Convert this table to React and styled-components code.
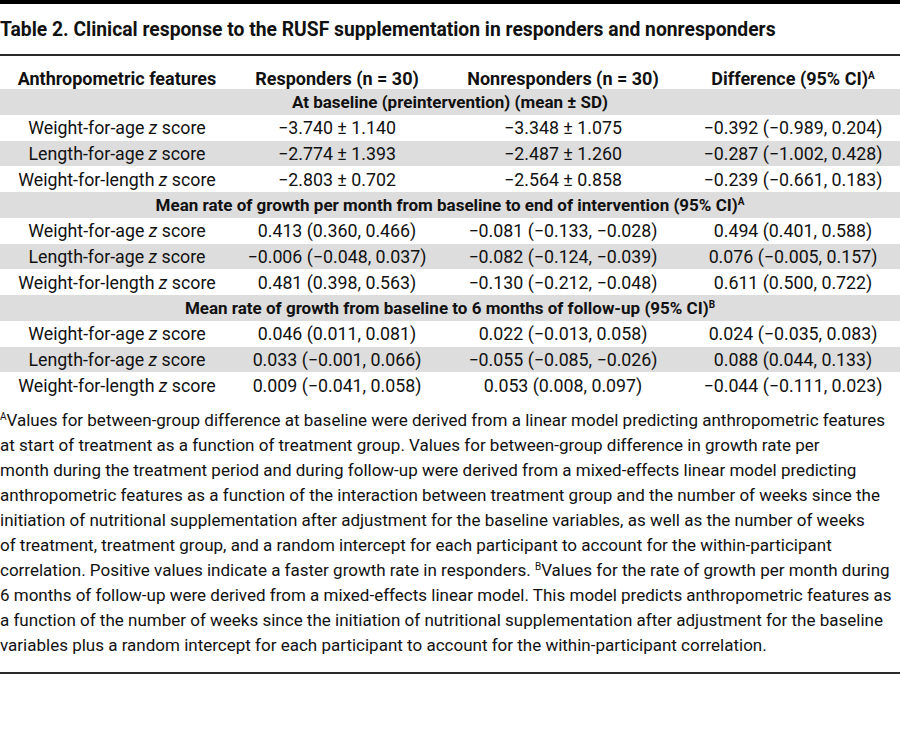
import React from "react";
import styled, { createGlobalStyle } from "styled-components";

const GlobalStyle = createGlobalStyle`
  body {
    margin: 0;
    background: #fff;
    color: #111;
    font-family: Roboto, "Liberation Sans", sans-serif;
  }
`;

const sections = [
  {
    title: <>At baseline (preintervention) (mean ± SD)</>,
    rows: [
      ["Weight-for-age", "−3.740 ± 1.140", "−3.348 ± 1.075", "−0.392 (−0.989, 0.204)"],
      ["Length-for-age", "−2.774 ± 1.393", "−2.487 ± 1.260", "−0.287 (−1.002, 0.428)"],
      ["Weight-for-length", "−2.803 ± 0.702", "−2.564 ± 0.858", "−0.239 (−0.661, 0.183)"],
    ],
  },
  {
    title: (
      <>
        Mean rate of growth per month from baseline to end of intervention (95% CI)<sup>A</sup>
      </>
    ),
    rows: [
      ["Weight-for-age", "0.413 (0.360, 0.466)", "−0.081 (−0.133, −0.028)", "0.494 (0.401, 0.588)"],
      ["Length-for-age", "−0.006 (−0.048, 0.037)", "−0.082 (−0.124, −0.039)", "0.076 (−0.005, 0.157)"],
      ["Weight-for-length", "0.481 (0.398, 0.563)", "−0.130 (−0.212, −0.048)", "0.611 (0.500, 0.722)"],
    ],
  },
  {
    title: (
      <>
        Mean rate of growth from baseline to 6 months of follow-up (95% CI)<sup>B</sup>
      </>
    ),
    rows: [
      ["Weight-for-age", "0.046 (0.011, 0.081)", "0.022 (−0.013, 0.058)", "0.024 (−0.035, 0.083)"],
      ["Length-for-age", "0.033 (−0.001, 0.066)", "−0.055 (−0.085, −0.026)", "0.088 (0.044, 0.133)"],
      ["Weight-for-length", "0.009 (−0.041, 0.058)", "0.053 (0.008, 0.097)", "−0.044 (−0.111, 0.023)"],
    ],
  },
];

const footnoteLines = [
  <>
    <sup>A</sup>Values for between-group difference at baseline were derived from a linear model predicting anthropometric features
  </>,
  "at start of treatment as a function of treatment group. Values for between-group difference in growth rate per",
  "month during the treatment period and during follow-up were derived from a mixed-effects linear model predicting",
  "anthropometric features as a function of the interaction between treatment group and the number of weeks since the",
  "initiation of nutritional supplementation after adjustment for the baseline variables, as well as the number of weeks",
  "of treatment, treatment group, and a random intercept for each participant to account for the within-participant",
  <>
    correlation. Positive values indicate a faster growth rate in responders. <sup>B</sup>Values for the rate of growth per month during
  </>,
  "6 months of follow-up were derived from a mixed-effects linear model. This model predicts anthropometric features as",
  "a function of the number of weeks since the initiation of nutritional supplementation after adjustment for the baseline",
  "variables plus a random intercept for each participant to account for the within-participant correlation.",
];

const App = () => {
  return (
    <Page>
      <GlobalStyle />
      <TopBar />
      <Title>Table 2. Clinical response to the RUSF supplementation in responders and nonresponders</Title>
      <Rule />
      <Table>
        <colgroup>
          <col width="234" />
          <col width="206" />
          <col width="246" />
          <col width="214" />
        </colgroup>
        <thead>
          <tr>
            <HeadCell>Anthropometric features</HeadCell>
            <HeadCell>Responders (n = 30)</HeadCell>
            <HeadCell>Nonresponders (n = 30)</HeadCell>
            <HeadCell>
              Difference (95% CI)<sup>A</sup>
            </HeadCell>
          </tr>
        </thead>
        <tbody>
          {sections.map((section, si) => (
            <React.Fragment key={si}>
              <Row $shaded>
                <SectionCell colSpan={4}>{section.title}</SectionCell>
              </Row>
              {section.rows.map((row, ri) => (
                <Row key={ri} $shaded={ri === 1}>
                  <Cell>
                    {row[0]} <i>z</i> score
                  </Cell>
                  <Cell>{row[1]}</Cell>
                  <Cell>{row[2]}</Cell>
                  <Cell>{row[3]}</Cell>
                </Row>
              ))}
            </React.Fragment>
          ))}
        </tbody>
      </Table>
      <Footnote>
        {footnoteLines.map((line, i) => (
          <FootLine key={i}>{line}</FootLine>
        ))}
      </Footnote>
      <Rule />
    </Page>
  );
};

export default App;

const Page = styled.div`
  width: 900px;
  height: 751px;
  background: #fff;

  sup {
    font-size: 10px;
    line-height: 0;
    vertical-align: 6px;
  }
`;

const TopBar = styled.div`
  height: 4px;
  background: #000;
`;

const Title = styled.h1`
  margin: 0;
  height: 50px;
  display: flex;
  align-items: center;
  padding-top: 1px;
  box-sizing: border-box;
  font-size: 19.3px;
  font-weight: 700;
  color: #111;
  white-space: nowrap;
`;

const Rule = styled.div`
  height: 2px;
  background: #2a2a2a;
`;

const Table = styled.table`
  width: 900px;
  border-collapse: collapse;
  table-layout: fixed;
  font-size: 17.8px;
`;

const HeadCell = styled.th`
  height: 32px;
  padding: 0 0 1px;
  vertical-align: bottom;
  text-align: center;
  font-size: 18px;
  font-weight: 700;
  white-space: nowrap;
  line-height: 18px;
`;

const Row = styled.tr`
  height: 25.75px;
  background: ${(p) => (p.$shaded ? "#dddddd" : "#fff")};
`;

const SectionCell = styled.td`
  padding: 0;
  text-align: center;
  font-size: 17px;
  font-weight: 700;
  white-space: nowrap;
`;

const Cell = styled.td`
  padding: 0;
  text-align: center;
  white-space: nowrap;
  line-height: 25px;
`;

const Footnote = styled.div`
  padding: 10px 0 14px;
  font-size: 17px;
  line-height: 25px;
`;

const FootLine = styled.div`
  white-space: nowrap;
`;
